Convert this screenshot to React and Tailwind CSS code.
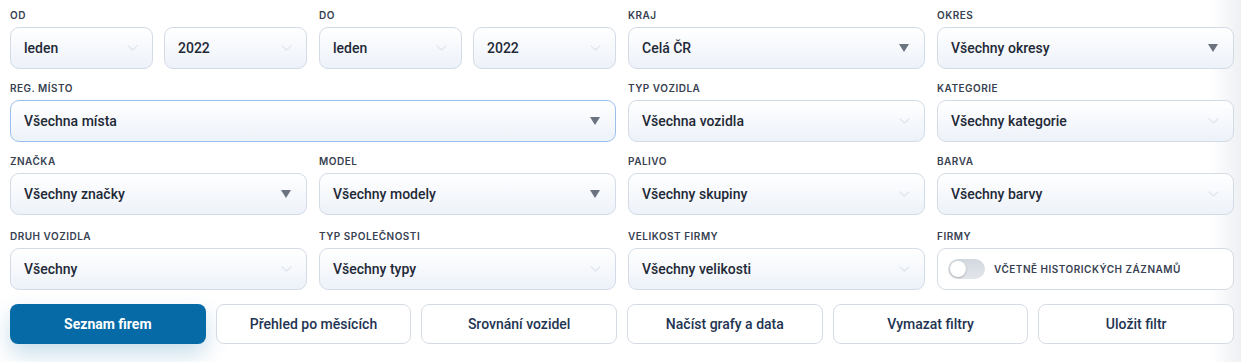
import React from "react";

const font = { fontFamily: "Inter, 'Noto Sans', sans-serif" };
const valFont = { fontFamily: "Roboto, 'Noto Sans', sans-serif" };

function Chevron() {
  return (
    <svg width="11" height="6" viewBox="0 0 11 6" className="absolute right-[14px] top-1/2 -translate-y-1/2" fill="none">
      <path d="M1 0.8 L5.5 5 L10 0.8" stroke="#dde4ee" strokeWidth="1.1" strokeLinecap="round" strokeLinejoin="round" />
    </svg>
  );
}

function Triangle() {
  return (
    <svg width="10" height="8" viewBox="0 0 10 8" className="absolute right-[15px] top-1/2 -translate-y-1/2">
      <path d="M0 0 H10 L5 8 Z" fill="#6b7280" />
    </svg>
  );
}

function Select({ value, tri, focus }) {
  return (
    <div
      style={valFont}
      className={
        "relative h-[42px] rounded-[9px] border bg-linear-to-b from-white to-[#edf2f9] flex items-center pl-[13px] text-[14px] font-medium text-[#1f2937] " +
        (focus ? "border-[#9bc0ee]" : "border-[#d3dbe6]")
      }
    >
      <span>{value}</span>
      {tri ? <Triangle /> : <Chevron />}
    </div>
  );
}

function Label({ children }) {
  return (
    <div className="h-[14px] mb-[5px] text-[10px] leading-[14px] font-semibold tracking-[0.05em] uppercase text-[#374151]">
      {children}
    </div>
  );
}

function Field({ label, className = "", children }) {
  return (
    <div className={className}>
      <Label>{label}</Label>
      {children}
    </div>
  );
}

function Btn({ children, primary }) {
  return (
    <button
      style={valFont}
      className={
        "h-[40px] rounded-[8px] text-[14px] flex items-center justify-center " +
        (primary
          ? "bg-[#066aa6] text-white font-bold shadow-[0_10px_22px_rgba(6,106,166,0.22)]"
          : "bg-white border border-[#d5dbe3] text-[#1e3452] font-medium")
      }
    >
      {children}
    </button>
  );
}

export default function App() {
  return (
    <div
      style={font}
      className="w-[1241px] h-[362px] bg-linear-to-r from-white from-[97.5%] to-[#eef0f3] pl-[10px] pr-[7px] pt-[8px]"
    >
      <div className="grid grid-cols-4 gap-x-[12px] gap-y-[12px]">
        <Field label="Od">
          <div className="grid grid-cols-2 gap-[11px]">
            <Select value="leden" />
            <Select value="2022" />
          </div>
        </Field>
        <Field label="Do">
          <div className="grid grid-cols-2 gap-[11px]">
            <Select value="leden" />
            <Select value="2022" />
          </div>
        </Field>
        <Field label="Kraj">
          <Select value="Celá ČR" tri />
        </Field>
        <Field label="Okres">
          <Select value="Všechny okresy" tri />
        </Field>

        <Field label="Reg. místo" className="col-span-2">
          <Select value="Všechna místa" tri focus />
        </Field>
        <Field label="Typ vozidla">
          <Select value="Všechna vozidla" />
        </Field>
        <Field label="Kategorie">
          <Select value="Všechny kategorie" />
        </Field>

        <Field label="Značka">
          <Select value="Všechny značky" tri />
        </Field>
        <Field label="Model">
          <Select value="Všechny modely" tri />
        </Field>
        <Field label="Palivo">
          <Select value="Všechny skupiny" />
        </Field>
        <Field label="Barva">
          <Select value="Všechny barvy" />
        </Field>

        <Field label="Druh vozidla" className="mt-[2px]">
          <Select value="Všechny" />
        </Field>
        <Field label="Typ společnosti" className="mt-[2px]">
          <Select value="Všechny typy" />
        </Field>
        <Field label="Velikost firmy" className="mt-[2px]">
          <Select value="Všechny velikosti" />
        </Field>
        <Field label="Firmy" className="mt-[2px]">
          <div className="h-[42px] rounded-[9px] border border-[#d5dbe3] bg-white flex items-center pl-[10px] gap-[9px]">
            <div className="relative w-[37px] h-[20px] rounded-full bg-linear-to-b from-[#d3d8df] to-[#e2e6eb]">
              <div className="absolute left-[2px] top-[2px] w-[16px] h-[16px] rounded-full bg-white shadow-[0_1px_2px_rgba(0,0,0,0.25)]" />
            </div>
            <span className="text-[10px] font-semibold tracking-[0.05em] uppercase text-[#374151]">
              Včetně historických záznamů
            </span>
          </div>
        </Field>
      </div>

      <div className="grid grid-cols-6 gap-[10px] mt-[14px]">
        <Btn primary>Seznam firem</Btn>
        <Btn>Přehled po měsících</Btn>
        <Btn>Srovnání vozidel</Btn>
        <Btn>Načíst grafy a data</Btn>
        <Btn>Vymazat filtry</Btn>
        <Btn>Uložit filtr</Btn>
      </div>
    </div>
  );
}
